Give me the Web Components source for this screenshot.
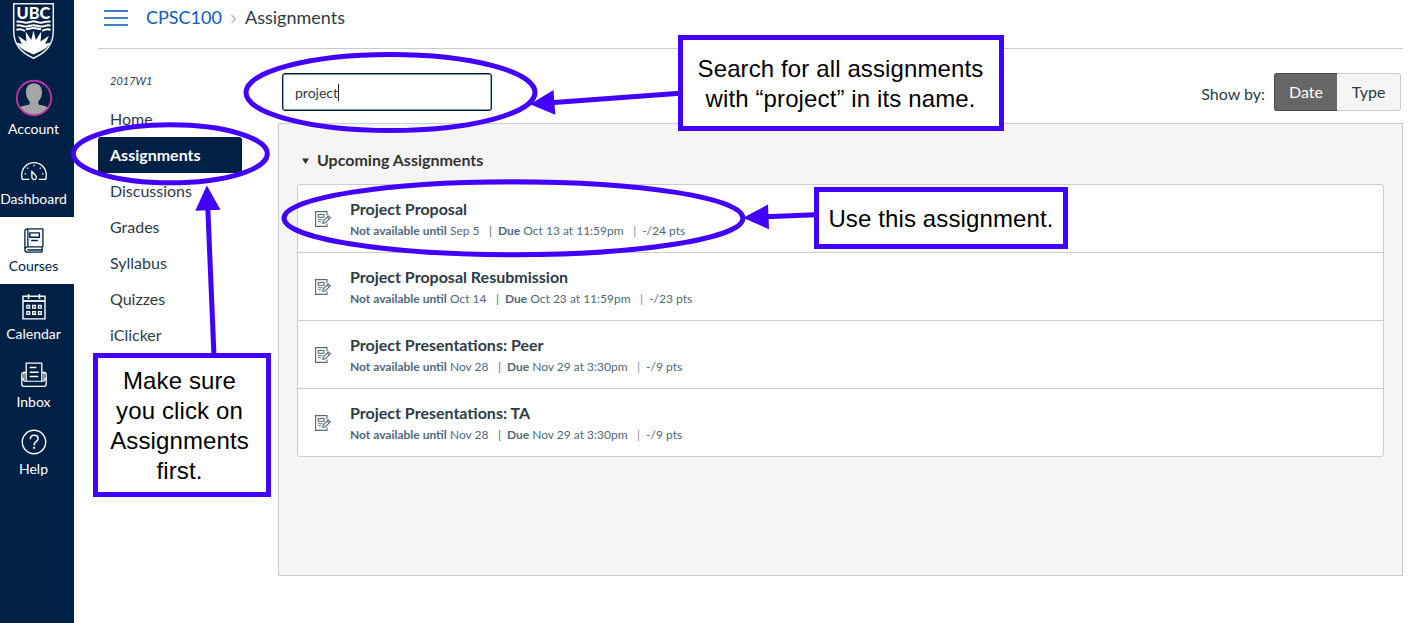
<!DOCTYPE html>
<html lang="en"><head><meta charset="utf-8"><title>CPSC100 Assignments</title>
<style>
html,body{margin:0;height:623px;overflow:hidden;background:#fff}
body{font-family:Lato,"Open Sans",sans-serif;color:#2d3b45}
</style></head><body>
<course-app></course-app>
<script>
const define=(name,tpl)=>customElements.define(name,class extends HTMLElement{
  constructor(){super();this.attachShadow({mode:'open'}).innerHTML=typeof tpl==='function'?tpl(this):tpl;}
});

const GLYPHS={
account:`<svg width="38" height="38" viewBox="0 0 38 38"><defs><clipPath id="c"><circle cx="19" cy="19" r="17"/></clipPath></defs><g clip-path="url(#c)" fill="#a5a5a5"><path d="M19 4.200c5.200 0 8 3.700 8 8.900 0 5-2 7.500-3.700 9.700v1.600c0 1 1 1.300 2.500 1.700 4 1 8 2 10 4V38H2v-8c2-2 6-3 10.200-3.900 1.500-.4 2.500-.7 2.500-1.700v-1.600c-1.700-2.200-3.700-4.700-3.700-9.700 0-5.200 2.800-8.900 8-8.900z"/></g><circle cx="19" cy="19" r="17.200" fill="none" stroke="#bf32a4" stroke-width="1.900"/></svg>`,
dashboard:`<svg width="26" height="20" viewBox="0 0 26 20" fill="none" stroke="#fff" stroke-width="1.300" stroke-linejoin="round"><path d="M8.300 18.300H1.200c-.4-1.300-.5-2.600-.5-4C.7 7 6.200 1.700 13 1.700S25.300 7 25.300 14.300c0 1.400-.1 2.700-.5 4h-7.100"/><path d="M10.800 10.200l3.900 4.400c1.400 1.700.6 3.800-1.200 3.900-1.600.1-2.600-1.200-2.600-2.600z"/><path d="M13 3.800v1.500M6.200 6.600l1 1M19.800 6.600l-1 1M3.600 12.600l1.300.5M22.400 12.600l-1.300.5"/></svg>`,
courses:`<svg width="20" height="25" viewBox="0 0 20 25" fill="none" stroke="#002145" stroke-width="1.300" stroke-linejoin="round"><path d="M18.900 19V.8H3.500C1.900.8.900 1.600.9 3.200v18.200c0 1.700 1 2.700 2.600 2.700h14.600v-5.200H3.500c-1.600 0-2.600.9-2.600 2.400M3.900.8v18.100M3.500 22h14.600"/><path d="M5.800 4.900h9.600v4.300H5.800zM7.200 12.500h6.800" stroke-width="1.400"/></svg>`,
calendar:`<svg width="24" height="28" viewBox="0 0 24 28" fill="none" stroke="#fff" stroke-width="1.400"><path d="M1 3.200h22v22.700H1z"/><path d="M1 8h22" stroke-width="1.800"/><path d="M6.500 1v5M17.500 1v5" stroke-width="1.500"/><path d="M4.900 12.400h2.700v2.700H4.900zM10.700 12.400h2.700v2.700h-2.700zM16.500 12.400h2.700v2.700h-2.700zM4.900 18.600h2.700v2.700H4.900zM10.700 18.600h2.700v2.700h-2.700zM16.500 18.600h2.700v2.700h-2.700z" stroke-width="1.350"/></svg>`,
inbox:`<svg width="26" height="26" viewBox="0 0 26 26" fill="none" stroke="#fff" stroke-width="1.300" stroke-linejoin="round"><path d="M5.200 19V1.200h15.600V19M5.200 10.500H2.800c-1.200 0-2 .8-2 2v9.800c0 1.200.8 2.100 2 2.100h20.400c1.200 0 2-.9 2-2.100v-9.800c0-1.200-.8-2-2-2h-2.400"/><path d="M.8 15.600l2.400 3.600h19.600l2.400-3.600M3 11v7.500M23 11v7.500" stroke-width="1.100"/><path d="M8.700 5.500h6.700M8.700 10.200h9M8.700 14.500h8.600" stroke-width="1.400"/></svg>`,
help:`<svg width="26" height="26" viewBox="0 0 26 26" fill="none" stroke="#fff"><circle cx="13" cy="13" r="11.700" stroke-width="1.400"/><path d="M9.300 10.300c0-2.500 1.500-4 3.900-4 2.300 0 3.900 1.300 3.900 3.300 0 3.100-4 3-4 6.100v.9" stroke-width="1.500"/><circle cx="13.100" cy="18.800" r="1.100" fill="#fff" stroke="none"/></svg>`
};

define('rail-item',el=>{const on=el.hasAttribute('current');return `<style>
:host{display:flex;flex-direction:column;align-items:center;flex:none;width:74px;height:var(--h,68px);box-sizing:border-box;padding-right:7px;background:${on?'#fff':'transparent'};color:${on?'#002145':'#fff'};font-size:14px;line-height:18px;white-space:nowrap}
.i{height:var(--ih,26px);margin-top:var(--top,9px);margin-bottom:var(--gap,5px);display:flex;align-items:center}svg{display:block}
</style><div class="i">${GLYPHS[el.getAttribute('icon')]}</div><div><slot></slot></div>`});

define('ubc-crest',`<style>:host{display:block;height:80px;box-sizing:border-box;padding:1px 0 0 12px}svg{display:block}</style>
<svg width="43" height="59" viewBox="0 0 43 59"><path d="M1.700 2.700h39.600v27c0 14-7 21.500-19.800 27.500C8.700 51.200 1.700 43.700 1.700 29.700z" fill="#002145" stroke="#e9edf1" stroke-width="1.500"/>
<text x="4.600" y="18.100" textLength="33.800" lengthAdjust="spacingAndGlyphs" font-family="Lato,sans-serif" font-weight="900" font-size="17" fill="#fff">UBC</text>
<g fill="none" stroke="#fff" stroke-width="2"><path d="M4.500 20.700c4-1.200 6.500 1.300 10 1 3-.3 4.600-1.400 7-1.400s4 1.100 7 1.400c3.500.3 6-2.200 10-1"/><path d="M4.500 24.600c4-1.200 6.500 1.300 10 1 3-.3 4.600-1.400 7-1.400s4 1.100 7 1.400c3.500.3 6-2.200 10-1"/><path d="M4.500 29c3-1.500 6-.3 8.500.9M38.500 29c-3-1.500-6-.3-8.500.9M14 28c3 0 5-1 7.500-1s4.500 1 7.500 1"/></g>
<path d="M21.500 29.500l2.300 9.500 5.500-8.500-.7 10 8.400-5.800-3.800 8.300 5-1.500c-1.500 4.500-7.200 8-16.700 12C12 49.500 6.300 46 4.800 41.500l5 1.500L6 34.700l8.400 5.800-.7-10 5.500 8.500z" fill="#fff"/></svg>`);

define('global-rail',`<style>:host{display:flex;flex-direction:column;flex:none;width:74px;height:623px;background:#002145}</style>
<ubc-crest></ubc-crest>
<rail-item icon="account" style="--h:69px;--top:-1px;--ih:38px;--gap:3px">Account</rail-item>
<rail-item icon="dashboard" style="--h:68px;--top:10px;--ih:24px;--gap:7px">Dashboard</rail-item>
<rail-item icon="courses" current style="--h:67px;--top:10px;--gap:4px">Courses</rail-item>
<rail-item icon="calendar" style="--top:10px">Calendar</rail-item>
<rail-item icon="inbox" style="--top:10px">Inbox</rail-item>
<rail-item icon="help">Help</rail-item>`);

define('crumb-bar',`<style>:host{display:flex;align-items:center;height:49px;box-sizing:border-box;padding:0 0 14px 6px;border-bottom:1px solid #c7cdd1;font-size:18px}
svg{display:block;flex:none}.menu{margin:2px 18px 0 0}a{color:#0a5cbd;width:76px}.sep{margin:4px 9px 0 9px}</style>
<svg class="menu" width="24" height="18" viewBox="0 0 24 18"><path d="M0 2h24M0 9h24M0 16h24" stroke="#3c7fca" stroke-width="1.800"/></svg>
<a>CPSC100</a><svg class="sep" width="5" height="10" viewBox="0 0 5 10"><path d="M.5 1l4 4-4 4" fill="none" stroke="#73818c"/></svg><span>Assignments</span>`);

define('course-link',el=>{const on=el.hasAttribute('current');return `<style>:host{display:flex;align-items:center;height:36px;width:144px;box-sizing:border-box;padding:0 0 2px 12px;font-size:16px;border-radius:3px;${on?'background:#002145;color:#fff;font-weight:700':''}}</style><slot></slot>`});
define('course-nav',`<style>:host{display:block;width:180px;flex:none}.term{font-size:11px;font-style:italic;line-height:16px;padding:24px 0 12px 12px}</style>
<div class="term">2017W1</div><course-link>Home</course-link><course-link current>Assignments</course-link><course-link>Discussions</course-link><course-link>Grades</course-link><course-link>Syllabus</course-link><course-link>Quizzes</course-link><course-link>iClicker</course-link>`);

define('search-tools',`<style>:host{display:flex;align-items:flex-start;height:74px;box-sizing:border-box;padding:24px 2px 0 4px}
.s{width:210px;height:38px;box-sizing:border-box;border:1px solid #002145;border-radius:3px;box-shadow:inset 0 0 0 .4px #002145;display:flex;align-items:center;padding:0 0 0 12px;font-size:14px}
.s i{width:1px;height:17px;background:#222}
.by{margin:10px 9px 0 auto;font-size:16px;line-height:22px}
.g{display:flex;width:127px;height:38px;box-sizing:border-box;font-size:16px}.g span{display:flex;align-items:center;justify-content:center;box-sizing:border-box;padding-bottom:2px;border:1px solid #c7cdd1;background:#f5f5f5;width:64px;border-radius:0 3px 3px 0;border-left:0}.g .on{width:63px;background:#666;border:1px solid #4a4a4a;border-right:0;color:#fff;border-radius:3px 0 0 3px}</style>
<div class="s"><span>project</span><i></i></div><div class="by">Show by:</div><div class="g"><span class="on">Date</span><span>Type</span></div>`);

define('assignment-row',el=>`<style>:host{display:flex;height:68px;box-sizing:border-box;border-top:1px solid #c7cdd1;padding-left:17px}:host(:first-child){border-top:0;height:67px}
svg{flex:none;margin:26px 19px 0 0}.b{padding-top:14px;white-space:nowrap}.n{font-size:16px;line-height:20px;font-weight:700;color:#2d3b45}.m{font-size:12px;line-height:16px;margin-top:4px;color:#50687a;display:flex;white-space:pre}.m b{font-weight:700}.p{margin:0 6px 0 9.500px}.p.l{color:#7b8e9c}</style>
<svg width="16" height="16" viewBox="0 0 16 16" fill="none" stroke="#536a79" stroke-width="1.100"><path d="M12 4.500V.6H.6v14.800H12v-3"/><path d="M3.200 3.500h5.800v2.700H3.200z"/><path d="M2.800 8.700h4.700M2.800 10.800h3.500" stroke-width=".9"/><path d="M7.700 12.500l.7-2.600 5-5 1.900 1.900-5 5zM12.200 6.100l1.900 1.900" stroke-linejoin="round"/></svg>
<div class="b"><div class="n">${el.getAttribute('name')}</div><div class="m"><b>Not available until</b> ${el.getAttribute('until')}<span class="p">|</span><b>Due</b> ${el.getAttribute('due')}<span class="p l">|</span>${el.getAttribute('pts')}</div></div>`);

define('assignment-panel',`<style>:host{display:block;height:453px;box-sizing:border-box;background:#f5f5f5;border:1px solid #c7cdd1;padding:0 18px}
.h{display:flex;align-items:center;height:60px;padding:10px 0 0 5px;box-sizing:border-box;font-size:16px;font-weight:700;color:#333}.h svg{margin:3px 8px 0 0}
.l{background:#fff;border:1px solid #c7cdd1;border-radius:3px;height:273px;box-sizing:border-box}</style>
<div class="h"><svg width="7" height="6" viewBox="0 0 7 6"><path d="M0 .5h7L3.500 6z" fill="#333"/></svg>Upcoming Assignments</div>
<div class="l"><assignment-row name="Project Proposal" until="Sep 5" due="Oct 13 at 11:59pm" pts="-/24 pts"></assignment-row><assignment-row name="Project Proposal Resubmission" until="Oct 14" due="Oct 23 at 11:59pm" pts="-/23 pts"></assignment-row><assignment-row name="Project Presentations: Peer" until="Nov 28" due="Nov 29 at 3:30pm" pts="-/9 pts"></assignment-row><assignment-row name="Project Presentations: TA" until="Nov 28" due="Nov 29 at 3:30pm" pts="-/9 pts"></assignment-row></div>`);

define('call-out',`<style>:host{position:absolute;box-sizing:border-box;border:5px solid #4200ff;background:#fff;color:#000;font:24px/30px "Liberation Sans",Arial,sans-serif;letter-spacing:.12px;text-align:center;white-space:nowrap;display:flex;flex-direction:column;align-items:center;justify-content:center;padding:2px 0 0 0}</style><slot></slot>`);
define('mark-up',`<style>:host{position:absolute;inset:0;pointer-events:none}svg{position:absolute;inset:0}
.a{left:678px;top:35px;width:326px;height:96px;padding-right:1px}.b{left:814px;top:187px;width:254px;height:62px}.c{left:93px;top:353px;width:178px;height:144px;padding-right:5px}</style>
<svg width="1422" height="623" fill="none" stroke="#4200ff" stroke-width="5"><ellipse cx="390.500" cy="92.500" rx="144.500" ry="38"/><ellipse cx="170.300" cy="153.800" rx="97" ry="29"/><ellipse cx="513.500" cy="218.200" rx="229.500" ry="36.500"/><path d="M680 93.300L554 102.600M815 214.800L766 216.800M214 356L207.800 208"/><g fill="#4200ff" stroke="none"><path d="M530 104.300L553.500 90l1.800 24.800zM743 217.800L768 204.500l1 24.700zM206.800 185.500L195.300 210.800l25.200-1.100z"/></g></svg>
<call-out class="a"><span>Search for all assignments</span><span>with “project” in its name.</span></call-out><call-out class="b"><span>Use this assignment.</span></call-out><call-out class="c"><span>Make sure</span><span>you click on</span><span>Assignments</span><span>first.</span></call-out>`);

define('course-app',`<style>:host{display:flex;position:relative;width:1422px;height:623px;overflow:hidden}main{flex:1;padding:0 19px 0 24px}.body{display:flex}.content{flex:1}</style>
<global-rail></global-rail><main><crumb-bar></crumb-bar><div class="body"><course-nav></course-nav><div class="content"><search-tools></search-tools><assignment-panel></assignment-panel></div></div></main><mark-up></mark-up>`);
</script></body></html>
